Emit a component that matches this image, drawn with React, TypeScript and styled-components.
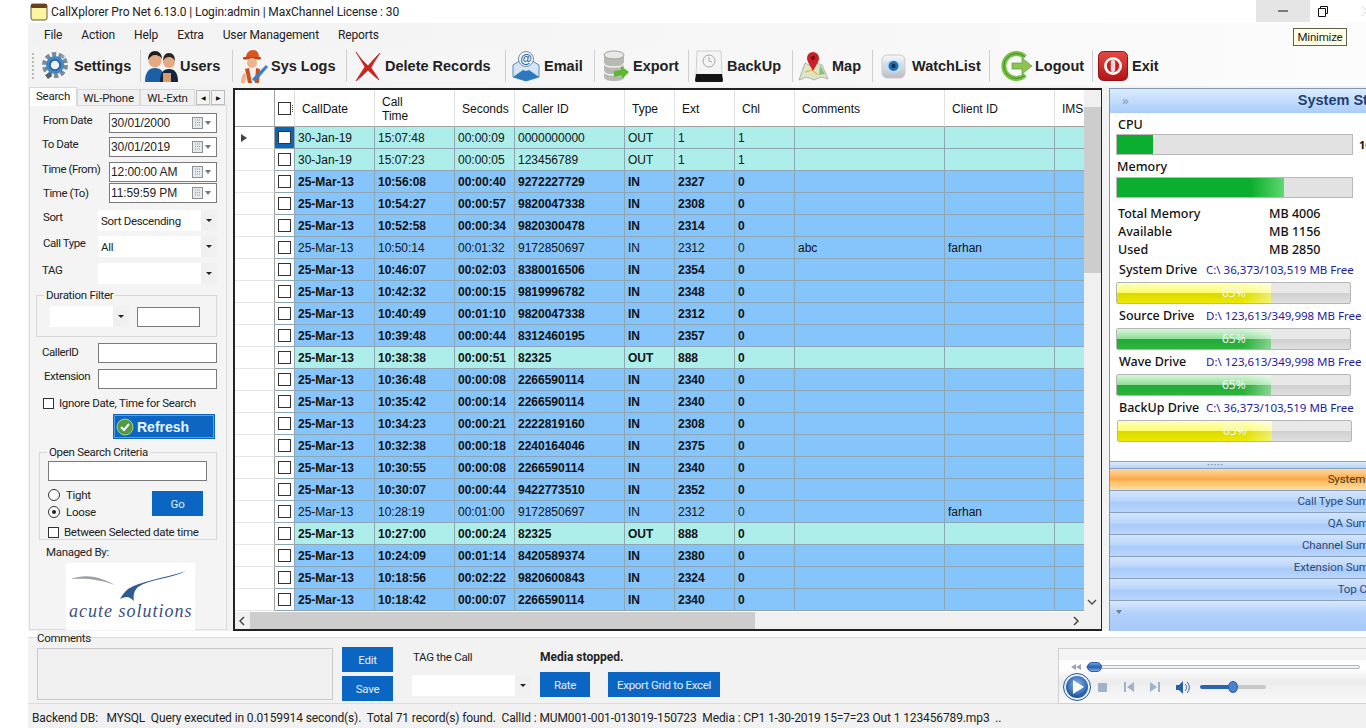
import React from 'react';
import styled, { createGlobalStyle } from 'styled-components';

// Grid data
interface CallRow {
  date: string;
  time: string;
  secs: string;
  caller: string;
  type: string;
  ext: string;
  chl: string;
  comment?: string;
  client?: string;
  plain?: boolean;
}

const m = (time: string, secs: string, caller: string, ext: string, extra: Partial<CallRow> = {}): CallRow => ({
  date: '25-Mar-13',
  time,
  secs,
  caller,
  type: 'IN',
  ext,
  chl: '0',
  ...extra,
});

const rows: CallRow[] = [
  { date: '30-Jan-19', time: '15:07:48', secs: '00:00:09', caller: '0000000000', type: 'OUT', ext: '1', chl: '1', plain: true },
  { date: '30-Jan-19', time: '15:07:23', secs: '00:00:05', caller: '123456789', type: 'OUT', ext: '1', chl: '1', plain: true },
  m('10:56:08', '00:00:40', '9272227729', '2327'),
  m('10:54:27', '00:00:57', '9820047338', '2308'),
  m('10:52:58', '00:00:34', '9820300478', '2314'),
  m('10:50:14', '00:01:32', '9172850697', '2312', { plain: true, comment: 'abc', client: 'farhan' }),
  m('10:46:07', '00:02:03', '8380016506', '2354'),
  m('10:42:32', '00:00:15', '9819996782', '2348'),
  m('10:40:49', '00:01:10', '9820047338', '2312'),
  m('10:39:48', '00:00:44', '8312460195', '2357'),
  m('10:38:38', '00:00:51', '82325', '888', { type: 'OUT' }),
  m('10:36:48', '00:00:08', '2266590114', '2340'),
  m('10:35:42', '00:00:14', '2266590114', '2340'),
  m('10:34:23', '00:00:21', '2222819160', '2308'),
  m('10:32:38', '00:00:18', '2240164046', '2375'),
  m('10:30:55', '00:00:08', '2266590114', '2340'),
  m('10:30:07', '00:00:44', '9422773510', '2352'),
  m('10:28:19', '00:01:00', '9172850697', '2312', { plain: true, client: 'farhan' }),
  m('10:27:00', '00:00:24', '82325', '888', { type: 'OUT' }),
  m('10:24:09', '00:01:14', '8420589374', '2380'),
  m('10:18:56', '00:02:22', '9820600843', '2324'),
  m('10:18:42', '00:00:07', '2266590114', '2340'),
];

const columns = '40px 20px 80px 80px 60px 110px 50px 60px 60px 150px 110px 60px';

const GlobalStyle = createGlobalStyle`
  html, body {
    margin: 0;
    height: 100%;
    overflow: hidden;
    background: #fff;
  }
  * {
    box-sizing: border-box;
  }
`;

const Shell = styled.div`
  position: relative;
  width: 1366px;
  height: 728px;
  padding-left: 28px;
  background: #fff;
  overflow: hidden;
  font-family: 'Liberation Sans', Arial, sans-serif;
  font-size: 12px;
  color: #111;
`;

/* Title bar */
const TitleBar = styled.div`
  display: flex;
  align-items: center;
  height: 23px;
  padding-left: 2px;
  background: #fff;
`;

const TitleText = styled.span`
  margin-left: 3px;
  font-family: Roboto, sans-serif;
  font-size: 12px;
  letter-spacing: -0.1px;
  color: #222;
`;

const WindowButtons = styled.div`
  display: flex;
  margin-left: auto;
`;

const WindowButton = styled.div<{ $hover?: boolean; $w: number }>`
  display: flex;
  align-items: center;
  justify-content: center;
  flex: none;
  width: ${(p) => p.$w}px;
  height: 22px;
  margin-top: -1px;
  background: ${(p) => (p.$hover ? '#e5e5e5' : 'transparent')};
`;

const CloseCorner = styled(WindowButton)`
  justify-content: flex-end;
  overflow: hidden;
`;

const Tooltip = styled.div`
  position: absolute;
  left: 1293px;
  top: 28px;
  width: 54px;
  height: 18px;
  border: 1px solid #5f5f4f;
  background: #ffffe6;
  font-family: Roboto, sans-serif;
  font-size: 11.5px;
  letter-spacing: -0.2px;
  line-height: 16px;
  text-align: center;
  color: #222;
`;

/* Menu */
const MenuBar = styled.div`
  display: flex;
  align-items: center;
  gap: 19px;
  height: 23px;
  padding-left: 16px;
  background: linear-gradient(90deg, #f2f2f2, #f8f8f8 70%, #fcfcfc);
  font-family: Roboto, sans-serif;
  font-size: 12px;
  letter-spacing: -0.12px;
  color: #222;
`;

/* Toolbar */
const Toolbar = styled.div`
  display: flex;
  align-items: center;
  height: 40px;
  padding-left: 4px;
  background: linear-gradient(90deg, #f3f3f3, #f8f8f8 70%, #fcfcfc);
`;

const ToolGrip = styled.div`
  width: 2px;
  height: 26px;
  margin-right: 6px;
  border-left: 2px dotted #b8b8b8;
`;

const ToolItem = styled.div<{ $w: number; $gap: number; $pad: number }>`
  display: flex;
  align-items: center;
  flex: none;
  gap: ${(p) => p.$gap}px;
  width: ${(p) => p.$w}px;
  height: 32px;
  padding-left: ${(p) => p.$pad}px;
  font-size: 14.5px;
  font-weight: 700;
  color: #222;
  white-space: nowrap;
  border-right: 1px solid #cfcfcf;
  &:last-child {
    border-right: 0;
  }
`;

/* Main area */
const Main = styled.div`
  display: flex;
  height: 545px;
  background: #f2f2f2;
`;

const LeftPanel = styled.div`
  flex: none;
  width: 205px;
  padding: 2px 6px 0 1px;
`;

const Tabs = styled.div`
  display: flex;
  align-items: flex-end;
  height: 18px;
  font-family: Roboto, sans-serif;
  font-size: 11.5px;
  letter-spacing: -0.2px;
  color: #222;
`;

const Tab = styled.div<{ $active?: boolean; $w: number }>`
  width: ${(p) => p.$w}px;
  height: ${(p) => (p.$active ? 19 : 17)}px;
  line-height: 16px;
  text-align: center;
  background: ${(p) => (p.$active ? '#fff' : '#f0f0f0')};
  border: 1px solid #d9d9d9;
  border-bottom: ${(p) => (p.$active ? '0' : '1px solid #d9d9d9')};
  position: relative;
  z-index: ${(p) => (p.$active ? 1 : 0)};
`;

const TabArrows = styled.div`
  display: flex;
  margin-left: 1px;
  margin-bottom: 1px;
`;

const TabArrow = styled.div`
  display: flex;
  align-items: center;
  justify-content: center;
  width: 14px;
  height: 15px;
  background: #f4f4f4;
  border: 1px solid #bdbdbd;
  font-size: 6px;
  color: #111;
  & + & {
    margin-left: 1px;
  }
`;

const TabBody = styled.div`
  height: 525px;
  margin-top: -1px;
  padding: 7px 9px 0 9px;
  border: 1px solid #dcdcdc;
  background: #f4f4f4;
  font-family: Roboto, sans-serif;
  font-size: 11.5px;
  letter-spacing: -0.3px;
  color: #222;
`;

const FieldRow = styled.div<{ $mt: number; $h?: number }>`
  display: flex;
  justify-content: space-between;
  height: ${(p) => p.$h ?? 20}px;
  margin-top: ${(p) => p.$mt}px;
`;

const FieldLabel = styled.span<{ $x?: number; $y?: number }>`
  margin: ${(p) => p.$y ?? 0}px 0 0 ${(p) => p.$x ?? 0}px;
  line-height: 14px;
  letter-spacing: -0.45px;
  white-space: nowrap;
`;

const DateBox = styled.div`
  display: flex;
  align-items: center;
  justify-content: space-between;
  width: 108px;
  height: 100%;
  padding: 0 4px 0 1px;
  border: 1px solid #7a7a7a;
  background: #fff;
  font-family: 'Liberation Sans', sans-serif;
  font-size: 12px;
  letter-spacing: -0.1px;
`;

const SelectBox = styled.div<{ $w: number }>`
  display: flex;
  align-items: center;
  justify-content: space-between;
  width: ${(p) => p.$w}px;
  height: 100%;
  padding-left: 3px;
  background: #fff;
  line-height: 20px;
`;

const SelectArrow = styled.span<{ $end?: boolean }>`
  display: flex;
  align-items: center;
  justify-content: center;
  flex: none;
  width: 16px;
  height: 100%;
  margin-left: ${(p) => (p.$end ? 'auto' : '0')};
  background: #f0f0f0;
  &::after {
    content: '';
    border-top: 3px solid #222;
    border-left: 3px solid transparent;
    border-right: 3px solid transparent;
  }
`;

const TextBox = styled.div<{ $w: number; $h?: number }>`
  flex: none;
  width: ${(p) => p.$w}px;
  height: ${(p) => p.$h ?? 20}px;
  background: #fff;
  border: 1px solid #7a7a7a;
`;

const Group = styled.fieldset<{ $mt: number; $h: number; $ml?: number; $pt?: number }>`
  display: block;
  min-width: 0;
  height: ${(p) => p.$h}px;
  margin: ${(p) => p.$mt}px 0 0 ${(p) => p.$ml ?? 0}px;
  padding: ${(p) => p.$pt ?? 4}px 8px 0 8px;
  border: 1px solid #d8d8d8;
`;

const GroupLegend = styled.legend`
  margin-left: -1px;
  padding: 0 2px;
  line-height: 14px;
`;

const DurationRow = styled.div`
  display: flex;
  align-items: flex-end;
  gap: 8px;
  height: 21px;
  margin-left: 5px;
`;

const CheckRow = styled.label<{ $mt: number; $ml: number }>`
  display: flex;
  align-items: center;
  gap: 5px;
  height: 14px;
  margin: ${(p) => p.$mt}px 0 0 ${(p) => p.$ml}px;
  white-space: nowrap;
`;

const CheckMark = styled.span`
  flex: none;
  width: 11px;
  height: 11px;
  border: 1px solid #333;
  background: #fff;
`;

const RefreshButton = styled.div`
  display: flex;
  align-items: center;
  gap: 3px;
  width: 102px;
  height: 25px;
  margin: 4px 0 0 74px;
  padding-left: 3px;
  background: #0d66c2;
  box-shadow: inset 0 0 0 1px #0d66c2, inset 0 0 0 2px #4ea3ee;
  font-family: 'Liberation Sans', sans-serif;
  font-size: 14px;
  font-weight: 700;
  letter-spacing: 0;
  color: #e8f3fc;
`;

const SearchOptions = styled.div`
  display: flex;
  justify-content: space-between;
  margin-top: 10px;
  padding-right: 5px;
`;

const RadioCol = styled.div`
  display: flex;
  flex-direction: column;
  gap: 3px;
  margin-top: -3px;
`;

const RadioRow = styled.label`
  display: flex;
  align-items: center;
  gap: 6px;
  height: 14px;
`;

const RadioMark = styled.span<{ $on?: boolean }>`
  display: flex;
  align-items: center;
  justify-content: center;
  width: 12px;
  height: 12px;
  border: 1px solid #333;
  border-radius: 50%;
  background: #fff;
  &::after {
    content: '';
    display: ${(p) => (p.$on ? 'block' : 'none')};
    width: 4px;
    height: 4px;
    border-radius: 50%;
    background: #222;
  }
`;

const BlueButton = styled.div<{ $w: number }>`
  display: flex;
  align-items: center;
  justify-content: center;
  flex: none;
  width: ${(p) => p.$w}px;
  height: 25px;
  background: #0a66c2;
  font-family: Roboto, sans-serif;
  font-size: 11.5px;
  letter-spacing: -0.3px;
  color: #e4eff9;
`;

const ManagedLabel = styled.div`
  margin: 5px 0 4px 7px;
  line-height: 14px;
`;

const LogoBox = styled.div`
  position: relative;
  width: 129px;
  height: 67px;
  margin-left: 27px;
  background: #fff;
`;

const LogoWord = styled.div`
  position: absolute;
  left: 3px;
  bottom: 8px;
  font-family: 'Liberation Serif', serif;
  font-size: 18px;
  font-style: italic;
  letter-spacing: 1px;
  color: #3c4f80;
  white-space: nowrap;
`;

/* Grid */
const GridFrame = styled.div`
  position: relative;
  flex: none;
  width: 869px;
  height: 543px;
  margin-top: 2px;
  border: 1px solid #222;
  border-width: 2px 1px 2px 2px;
  background: #f0f0f0;
  overflow: hidden;
`;

const GridBody = styled.div`
  width: 849px;
  height: 522px;
  background: #fff;
  overflow: hidden;
`;

const GridRow = styled.div<{ $head?: boolean; $bg?: string; $bold?: boolean }>`
  display: grid;
  grid-template-columns: ${columns};
  height: ${(p) => (p.$head ? 37 : 22)}px;
  font-weight: ${(p) => (p.$bold ? 700 : 400)};
  color: #111;
  & > div:not(:first-child) {
    background: ${(p) => p.$bg ?? '#fff'};
  }
`;

const Cell = styled.div<{ $head?: boolean }>`
  display: flex;
  align-items: center;
  padding: ${(p) => (p.$head ? '2px 0 0 7px' : '1px 0 0 3px')};
  border-right: 1px solid ${(p) => (p.$head ? '#e2e2e2' : '#8ea6b4')};
  border-bottom: 1px solid ${(p) => (p.$head ? '#a0a0a0' : '#8ea6b4')};
  line-height: 14px;
  white-space: nowrap;
  overflow: hidden;
`;

const RowHeadCell = styled(Cell)`
  padding: 0;
  background: #fff;
  border-right-color: #a0a0a0;
  border-bottom-color: ${(p) => (p.$head ? '#a0a0a0' : '#e4e4e4')};
`;

const CheckCell = styled(Cell)<{ $current?: boolean }>`
  justify-content: flex-start;
  padding: 0 0 0 3px;
  background: ${(p) => (p.$current ? '#0b66b8' : 'inherit')} !important;
`;

const RowCheck = styled.span`
  flex: none;
  width: 13px;
  height: 13px;
  border: 1px solid #333;
  background: #fff;
`;

const HeadGrip = styled.span`
  flex: none;
  height: 7px;
  margin-left: 1px;
  border-left: 1px dotted #555;
`;

const RowPointer = styled.span`
  margin-left: 6px;
  border-left: 6px solid #444;
  border-top: 4px solid transparent;
  border-bottom: 4px solid transparent;
`;

const VScroll = styled.div`
  position: absolute;
  top: 0;
  right: 0;
  bottom: 18px;
  width: 17px;
  background: #f0f0f0;
`;

const VThumb = styled.div`
  width: 100%;
  height: 166px;
  margin-top: 17px;
  background: #cdcdcd;
`;

const HScroll = styled.div`
  display: flex;
  align-items: center;
  height: 18px;
  background: #f0f0f0;
`;

const HThumb = styled.div`
  width: 505px;
  height: 100%;
  margin-left: 15px;
  background: #cdcdcd;
`;

const ScrollGlyph = styled.svg<{ $x: number; $y: number }>`
  position: absolute;
  left: ${(p) => p.$x}px;
  top: ${(p) => p.$y}px;
`;

/* Right panel */
const RightPanel = styled.div`
  flex: none;
  width: 300px;
  height: 543px;
  margin: 2px 0 0 7px;
  border: 1px solid #7f97b2;
  background: #fff;
  font-family: 'Noto Sans', sans-serif;
  font-size: 12.5px;
  font-weight: 500;
  color: #111;
`;

const PanelHead = styled.div`
  display: flex;
  align-items: center;
  height: 24px;
  padding: 0 0 2px 12px;
  background: linear-gradient(#dcebfd, #a9cdf9);
  color: #8aa0bd;
`;

const PanelTitle = styled.span`
  margin-left: 169px;
  font-family: 'Liberation Sans', sans-serif;
  font-size: 14.5px;
  font-weight: 700;
  color: #1f3f77;
  white-space: nowrap;
`;

const PanelBody = styled.div`
  height: 348px;
  padding: 3px 0 0 6px;
`;

const MetricLabel = styled.div<{ $x?: number; $mt?: number; $h?: number }>`
  height: ${(p) => p.$h ?? 17}px;
  margin: ${(p) => p.$mt ?? 0}px 0 0 ${(p) => p.$x ?? 1}px;
  line-height: 17px;
  white-space: nowrap;
`;

const MeterRow = styled.div`
  display: flex;
  align-items: center;
`;

const Meter = styled.div<{ $mt?: number }>`
  width: 237px;
  height: 21px;
  margin-top: ${(p) => p.$mt ?? 0}px;
  background: #e2e2e2;
  border: 1px solid #b9b9b9;
  overflow: hidden;
`;

const MeterFill = styled.div<{ $fade?: boolean }>`
  height: 100%;
  background: ${(p) => (p.$fade ? 'linear-gradient(90deg, #0bae2e 80%, #5fd76f)' : '#0bae2e')};
`;

const CpuValue = styled.span`
  margin-left: 6px;
  font-size: 11px;
  font-weight: 700;
`;

const MemoryRow = styled.div`
  display: grid;
  grid-template-columns: 151px auto;
  height: 18px;
  padding-left: 2px;
  line-height: 18px;
`;

const DriveHead = styled.div<{ $mt: number }>`
  display: flex;
  align-items: center;
  height: 18px;
  margin: ${(p) => p.$mt}px 0 0 3px;
  white-space: nowrap;
`;

const DriveName = styled.span`
  width: 87px;
`;

const DriveFree = styled.span`
  font-size: 11.5px;
  font-weight: 400;
  color: #1c1c9e;
`;

const DriveBar = styled.div<{ $ml?: number }>`
  position: relative;
  width: 235px;
  height: 22px;
  margin: 4px 0 0 ${(p) => p.$ml ?? 0}px;
  border: 1px solid #b5b5b5;
  border-radius: 2px;
  background: linear-gradient(#e8e8e8 48%, #cfcfcf 50%, #e0e0e0);
  overflow: hidden;
`;

const DriveFill = styled.div<{ $tone: 'yellow' | 'green' }>`
  position: relative;
  height: 100%;
  background: ${(p) =>
    p.$tone === 'yellow'
      ? 'linear-gradient(#ffffc0, #fdfd70 48%, #dcd800 50%, #ecea00)'
      : 'linear-gradient(#d8f5d8, #90e09a 48%, #23a936 50%, #2cb53c)'};
  &::after {
    content: '';
    position: absolute;
    top: 0;
    right: 0;
    bottom: 0;
    width: 28px;
    background: linear-gradient(90deg, rgba(255, 255, 255, 0), rgba(255, 255, 255, 0.45));
  }
`;

const DrivePct = styled.span`
  position: absolute;
  left: 105px;
  top: 2px;
  font-size: 12px;
  font-weight: 400;
  line-height: 16px;
  color: #f4f4f4;
`;

const Splitter = styled.div`
  display: flex;
  align-items: center;
  justify-content: center;
  height: 8px;
  padding-right: 87px;
  background: linear-gradient(#dbe9fb, #b7d4f9);
  border-top: 1px solid #8aa2bd;
  border-bottom: 1px solid #8aa2bd;
  font-size: 6px;
  line-height: 4px;
  letter-spacing: 1px;
  color: #7d8a9a;
`;

const NavItem = styled.div<{ $active?: boolean }>`
  height: 22px;
  padding-right: 14px;
  border-bottom: 1px solid #86a0bd;
  background: ${(p) =>
    p.$active
      ? 'linear-gradient(#ffd9a0, #fba849 50%, #fdbe62 60%, #ffdfa6)'
      : 'linear-gradient(#d4e5fc, #bcd7fb 45%, #a9cbfa 55%, #b9d5fb)'};
  font-family: Roboto, sans-serif;
  font-size: 11.5px;
  font-weight: 400;
  letter-spacing: -0.1px;
  line-height: 21px;
  text-align: right;
  color: ${(p) => (p.$active ? '#4a3a20' : '#2a4a7a')};
`;

const NavFooter = styled.div`
  height: 30px;
  padding: 9px 0 0 6px;
  background: linear-gradient(#dbe9fc, #b3d1fa 40%, #a8caf9);
`;

/* Bottom section */
const BottomGroup = styled.div`
  display: flex;
  height: 67px;
  margin-top: 6px;
  padding: 0 0 0 9px;
  border-top: 1px solid #dcdcdc;
  border-bottom: 1px solid #dcdcdc;
  background: #f2f2f2;
`;

const BottomRow = styled.div`
  display: flex;
  width: 100%;
  height: 72px;
  margin-top: -7px;
  font-family: Roboto, sans-serif;
  font-size: 11.5px;
  letter-spacing: -0.3px;
  color: #222;
`;

const CommentsCol = styled.div`
  flex: none;
  width: 296px;
`;

const CommentsLabel = styled.div`
  width: 52px;
  height: 14px;
  line-height: 14px;
  background: #f2f2f2;
`;

const CommentsBox = styled.div`
  height: 52px;
  margin-top: 3px;
  border: 1px solid #c9c9c9;
  background: #f0f0f0;
`;

const EditCol = styled.div`
  display: flex;
  flex-direction: column;
  gap: 4px;
  margin: 16px 0 0 9px;
`;

const TagCol = styled.div`
  width: 119px;
  margin: 19px 0 0 19px;
`;

const TagLabel = styled.div`
  height: 14px;
  margin-left: 1px;
  line-height: 14px;
`;

const TagSelect = styled.div`
  height: 21px;
  margin-top: 11px;
`;

const MediaCol = styled.div`
  margin: 19px 0 0 9px;
`;

const MediaText = styled.div`
  height: 14px;
  line-height: 14px;
  font-size: 12px;
  font-weight: 700;
  letter-spacing: 0;
`;

const MediaButtons = styled.div`
  display: flex;
  gap: 18px;
  margin-top: 8px;
`;

const Player = styled.div`
  flex: none;
  width: 308px;
  height: 56px;
  margin: 17px 0 0 auto;
  border: 1px solid #d0d0d0;
  border-right: 0;
  background: linear-gradient(#fbfbfb, #ffffff 35%, #ececec 60%, #fafafa);
`;

const PlayerStrip = styled.div`
  height: 11px;
  background: #f4f4f4;
`;

const SeekRow = styled.div`
  display: flex;
  align-items: center;
  gap: 5px;
  height: 13px;
  padding-left: 12px;
`;

const SeekTrack = styled.div`
  position: relative;
  width: 274px;
  height: 4px;
  border: 1px solid #aeb6bf;
  border-radius: 2px;
  background: #f4f4f4;
`;

const SeekThumb = styled.span`
  position: absolute;
  left: 0;
  top: -4px;
  width: 15px;
  height: 10px;
  border-radius: 5px;
  background: linear-gradient(#6f9fe0, #2a5fb0 50%, #7eaae6);
  border: 1px solid #2b5ca6;
`;

const TransportRow = styled.div`
  display: flex;
  align-items: center;
  height: 28px;
  padding-left: 4px;
`;

const VolumeTrack = styled.div`
  position: relative;
  width: 66px;
  height: 4px;
  margin-left: 9px;
  border-radius: 2px;
  background: linear-gradient(90deg, #2a62b5 50%, #c8c8c8 50%);
`;

const VolumeThumb = styled.span`
  position: absolute;
  left: 28px;
  top: -4px;
  width: 10px;
  height: 12px;
  border-radius: 50%;
  background: #4a82cc;
  border: 1px solid #2b5ca6;
`;

const StatusBar = styled.div`
  display: flex;
  align-items: center;
  height: 24px;
  padding: 4px 0 0 4px;
  background: #f1f1f1;
  font-family: Roboto, sans-serif;
  font-size: 12px;
  letter-spacing: -0.12px;
  color: #222;
  white-space: nowrap;
`;

const MiniGlyph = styled.svg<{ $ml: number }>`
  flex: none;
  margin-left: ${(p) => p.$ml}px;
`;

/* Icons */
const AppIcon = () => (
  <svg width="18" height="18" viewBox="0 0 18 18">
    <rect x="1" y="1" width="16" height="16" rx="2" fill="#fdf3a0" stroke="#6b5a3a" />
    <rect x="1" y="1" width="16" height="4" rx="1" fill="#6b3f1f" />
  </svg>
);

const GearIcon = () => (
  <svg width="30" height="30" viewBox="0 0 30 30">
    <circle cx="15" cy="14" r="10.5" fill="none" stroke="#7d8b96" strokeWidth="5" strokeDasharray="4.2 2.4" />
    <circle cx="15" cy="14" r="9" fill="#3f86c8" />
    <circle cx="15" cy="14" r="5" fill="#eef3f7" stroke="#26598c" strokeWidth="1.5" />
    <path d="M5 24l5-3 2 4-4 3z" fill="#55606a" />
    <path d="M22 3l3 2-2 3-3-2z" fill="#8fa0ad" />
  </svg>
);

const UsersIcon = () => (
  <svg width="33" height="34" viewBox="0 0 33 34">
    <path d="M0 33c0-10 4-14 10-14s10 4 10 14z" fill="#1b5fa8" />
    <circle cx="10" cy="12" r="6.5" fill="#e3a983" />
    <path d="M3 11c0-6 3-9 7-9s7 3 7 8c-2-3-4-4-7-4s-5 2-7 5z" fill="#1d1d1d" />
    <path d="M15 33c0-9 3-13 9-13s9 4 9 13z" fill="#13253e" />
    <rect x="18" y="24" width="8" height="9" fill="#d59d6f" />
    <circle cx="24" cy="13" r="6" fill="#e3a983" />
    <path d="M18 12c0-5 2-8 6-8s6 3 6 8c-2-3-3-4-6-4s-4 1-6 4z" fill="#262626" />
  </svg>
);

const WorkerIcon = () => (
  <svg width="31" height="34" viewBox="0 0 31 34">
    <path d="M8 9c0-5 3-8 7-8s6 3 6 8z" fill="#d9541e" />
    <rect x="5" y="8" width="18" height="2.5" rx="1" fill="#b8441a" />
    <circle cx="14" cy="14" r="5" fill="#e9b48e" />
    <path d="M3 34c0-11 4-15 11-15s10 4 10 15z" fill="#f1f1ef" />
    <path d="M7 20l3 14h4l-3-15zM18 19l-1 15h4l1-14z" fill="#cf4e1c" />
    <path d="M14 30l14-14 2 2-13 15z" fill="#3d7fc4" />
    <path d="M3 34c0-5 1-8 3-10l3 2-2 8z" fill="#e9b48e" />
  </svg>
);

const CrossIcon = () => (
  <svg width="29" height="30" viewBox="0 0 29 30">
    <path d="M3 1c4 6 8 10 12 14 4-5 8-9 12-13-3 5-7 10-9 15 3 4 6 8 8 12-4-3-8-7-11-10-4 4-8 8-12 11 3-5 6-10 9-14C9 11 6 6 3 1z" fill="#d8201b" stroke="#a31512" strokeWidth=".6" />
  </svg>
);

const MailIcon = () => (
  <svg width="31" height="32" viewBox="0 0 31 32">
    <path d="M2 15l13-8 13 8v12l-13 4-13-4z" fill="#d3e4f5" stroke="#5a89b8" />
    <path d="M2 27l10-7 3 1 3-1 10 7-13 4z" fill="#2e78c0" />
    <circle cx="15" cy="9" r="7.5" fill="#f4f8fb" stroke="#6f8ea8" />
    <text x="15" y="13" fontSize="12" fontWeight="700" textAnchor="middle" fill="#2e5f94" fontFamily="Liberation Sans">@</text>
  </svg>
);

const DatabaseIcon = () => (
  <svg width="27" height="32" viewBox="0 0 27 32">
    <path d="M1 5v22c0 2.5 4 4 10 4s10-1.500 10-4V5z" fill="#b8b8b4" />
    <ellipse cx="11" cy="5" rx="10" ry="4" fill="#e8e8e4" stroke="#a2a29e" />
    <path d="M1 13c0 2.500 4 4 10 4s10-1.500 10-4M1 21c0 2.500 4 4 10 4s10-1.500 10-4" fill="none" stroke="#f0f0ee" strokeWidth="1.500" />
    <path d="M11 21l7-1v-4l8 6-7 7v-4l-8 2z" fill="#5cb82f" />
  </svg>
);

const BackupIcon = () => (
  <svg width="30" height="34" viewBox="0 0 30 34">
    <path d="M3 2h24l1 24H2z" fill="#f4f4f4" stroke="#cfcfcf" />
    <path d="M2 25h26l1 6c0 2-1 2-2 2H3c-1 0-2 0-2-2z" fill="#141414" />
    <circle cx="15" cy="12" r="6" fill="none" stroke="#a6a6a6" />
    <path d="M15 8v4l3 1" fill="none" stroke="#a6a6a6" />
  </svg>
);

const MapIcon = () => (
  <svg width="31" height="32" viewBox="0 0 31 32">
    <path d="M1 30l6-17 6 3 6-3 5 2 6 14-7-2-7 3-7-3z" fill="#dfe6c8" stroke="#9aa99a" strokeWidth=".8" />
    <path d="M7 22l7-2 6 5" fill="none" stroke="#e7c04a" strokeWidth="1.500" />
    <path d="M22 15l5 9-6 1z" fill="#8ec07a" />
    <path d="M15 21C11 14 9 11 9 8a6 6 0 0 1 12 0c0 3-2 6-6 13z" fill="#cb2027" />
    <circle cx="15" cy="8" r="2.200" fill="#7c1216" />
  </svg>
);

const EyeIcon = () => (
  <svg width="25" height="25" viewBox="0 0 25 25">
    <defs>
      <linearGradient id="eyeBg" x1="0" y1="0" x2="0" y2="1">
        <stop offset="0" stopColor="#f6f7f8" />
        <stop offset="1" stopColor="#b9bec4" />
      </linearGradient>
    </defs>
    <rect x="1" y="1" width="23" height="23" rx="5" fill="url(#eyeBg)" stroke="#c8cbcf" />
    <path d="M3 12c3-4 6-6 9.500-6S19 8 22 12c-3 4-6 6-9.500 6S6 16 3 12z" fill="#bfe0f5" />
    <circle cx="12.500" cy="12" r="5" fill="#1d6fb6" />
    <circle cx="12.500" cy="12" r="2.200" fill="#0c3358" />
  </svg>
);

const LogoutIcon = () => (
  <svg width="33" height="34" viewBox="0 0 33 34">
    <path d="M25 8a12.500 12.500 0 1 0 0 18" fill="none" stroke="#7cc043" strokeWidth="5" />
    <path d="M25 8a12.500 12.500 0 1 0 0 18" fill="none" stroke="#2d8f2a" strokeWidth="1" />
    <path d="M12 14h10v-5l10 8-10 8v-5H12z" fill="#8fc34f" stroke="#4f8f2d" strokeWidth=".6" />
  </svg>
);

const ExitIcon = () => (
  <svg width="30" height="30" viewBox="0 0 30 30">
    <defs>
      <linearGradient id="exitBg" x1="0" y1="0" x2="0" y2="1">
        <stop offset="0" stopColor="#e64a45" />
        <stop offset="1" stopColor="#b31414" />
      </linearGradient>
    </defs>
    <rect x="0.500" y="0.500" width="29" height="29" rx="5" fill="url(#exitBg)" stroke="#8f1414" />
    <circle cx="15" cy="15" r="9" fill="#f5f5f5" />
    <circle cx="15" cy="15" r="6.200" fill="#c81e1e" />
    <rect x="12.800" y="9" width="4.400" height="12" rx="2" fill="#f5d9d9" />
  </svg>
);

const CalendarIcon = () => (
  <svg width="20" height="12" viewBox="0 0 20 12">
    <rect x="0.500" y="0.500" width="10" height="11" fill="#e6e9ee" stroke="#8b8f96" />
    <path d="M3 3h5M3 5.500h5M3 8h5" stroke="#8f96a0" strokeDasharray="1 1" />
    <path d="M13 4h6l-3 4z" fill="#6f7680" />
  </svg>
);

const CheckBadge = () => (
  <svg width="18" height="18" viewBox="0 0 18 18">
    <circle cx="9" cy="9" r="8" fill="#4f9a42" stroke="#a8cf8f" />
    <path d="M5 9l3 3 5-6" fill="none" stroke="#fff" strokeWidth="2" />
  </svg>
);

const LogoBird = () => (
  <svg width="129" height="46" viewBox="0 0 129 46">
    <path d="M5 16c14-5 28-3 44 6-16-6-30-7-44-6z" fill="#9a9ea6" />
    <path d="M120 8C96 16 74 18 62 26c-4 3-6 7-8 10 6-3 9-3 14 2-1-6 0-10 4-14 12-8 32-8 48-16z" fill="#2f5b95" />
  </svg>
);

const PlayIcon = () => (
  <svg width="28" height="28" viewBox="0 0 28 28">
    <defs>
      <radialGradient id="playBg" cx="0.500" cy="0.400" r="0.600">
        <stop offset="0" stopColor="#8fbdf0" />
        <stop offset="1" stopColor="#164e9e" />
      </radialGradient>
    </defs>
    <circle cx="14" cy="14" r="13.500" fill="#eaf1fa" stroke="#25569e" />
    <circle cx="14" cy="14" r="11" fill="url(#playBg)" />
    <path d="M10 7l11 7-11 7z" fill="#fff" />
  </svg>
);

const toolItems = [
  { label: 'Settings', w: 101, pad: 0, gap: 4, icon: <GearIcon /> },
  { label: 'Users', w: 92, pad: 4, gap: 2, icon: <UsersIcon /> },
  { label: 'Sys Logs', w: 114, pad: 5, gap: 2, icon: <WorkerIcon /> },
  { label: 'Delete Records', w: 159, pad: 6, gap: 3, icon: <CrossIcon /> },
  { label: 'Email', w: 89, pad: 5, gap: 2, icon: <MailIcon /> },
  { label: 'Export', w: 94, pad: 8, gap: 3, icon: <DatabaseIcon /> },
  { label: 'BackUp', w: 104, pad: 5, gap: 3, icon: <BackupIcon /> },
  { label: 'Map', w: 80, pad: 5, gap: 3, icon: <MapIcon /> },
  { label: 'WatchList', w: 117, pad: 8, gap: 6, icon: <EyeIcon /> },
  { label: 'Logout', w: 103, pad: 10, gap: 2, icon: <LogoutIcon /> },
  { label: 'Exit', w: 90, pad: 5, gap: 4, icon: <ExitIcon /> },
];

const dateFields = [
  { label: 'From Date', value: '30/01/2000', mt: 0, x: 4, y: 0 },
  { label: 'To Date', value: '30/01/2019', mt: 4, x: 3, y: 0 },
  { label: 'Time (From)', value: '12:00:00 AM', mt: 5, x: 3, y: 0 },
  { label: 'Time (To)', value: '11:59:59 PM', mt: 1, x: 4, y: 3 },
];

const drives = [
  { name: 'System Drive', free: 'C:\\ 36,373/103,519 MB Free', tone: 'yellow' as const, mt: 1 },
  { name: 'Source Drive', free: 'D:\\ 123,613/349,998 MB Free', tone: 'green' as const, mt: 2 },
  { name: 'Wave Drive', free: 'D:\\ 123,613/349,998 MB Free', tone: 'green' as const, mt: 2 },
  { name: 'BackUp Drive', free: 'C:\\ 36,373/103,519 MB Free', tone: 'yellow' as const, mt: 2, ml: 1 },
];

const panels = ['System Stats', 'Call Type Summary', 'QA Summary', 'Channel Summary', 'Extension Summary', 'Top Callers'];

export default function App() {
  return (
    <Shell>
      <GlobalStyle />
      <TitleBar>
        <AppIcon />
        <TitleText>CallXplorer Pro Net 6.13.0 | Login:admin | MaxChannel License : 30</TitleText>
        <WindowButtons>
          <WindowButton $hover $w={54}>
            <svg width="10" height="10" viewBox="0 0 10 10"><path d="M0 5h10" stroke="#111" /></svg>
          </WindowButton>
          <WindowButton $w={26}>
            <svg width="10" height="11" viewBox="0 0 10 11"><path d="M2.500 2.500V.5h7v7h-2M.5 2.500h7v8h-7z" fill="none" stroke="#111" /></svg>
          </WindowButton>
          <CloseCorner $w={30}>
            <svg width="4" height="10" viewBox="0 0 4 10"><path d="M0 0l5 5-5 5" fill="none" stroke="#d8d8d8" /></svg>
          </CloseCorner>
        </WindowButtons>
      </TitleBar>
      <Tooltip>Minimize</Tooltip>

      <MenuBar>
        <span>File</span>
        <span>Action</span>
        <span>Help</span>
        <span>Extra</span>
        <span>User Management</span>
        <span>Reports</span>
      </MenuBar>

      <Toolbar>
        <ToolGrip />
        {toolItems.map((t) => (
          <ToolItem key={t.label} $w={t.w} $gap={t.gap} $pad={t.pad}>
            {t.icon}
            <span>{t.label}</span>
          </ToolItem>
        ))}
      </Toolbar>

      <Main>
        <LeftPanel>
          <Tabs>
            <Tab $active $w={48}>Search</Tab>
            <Tab $w={63}>WL-Phone</Tab>
            <Tab $w={55}>WL-Extn</Tab>
            <TabArrows>
              <TabArrow>◀</TabArrow>
              <TabArrow>▶</TabArrow>
            </TabArrows>
          </Tabs>
          <TabBody>
            {dateFields.map((f) => (
              <FieldRow key={f.label} $mt={f.mt}>
                <FieldLabel $x={f.x} $y={f.y}>{f.label}</FieldLabel>
                <DateBox>
                  {f.value}
                  <CalendarIcon />
                </DateBox>
              </FieldRow>
            ))}
            <FieldRow $mt={7} $h={21}>
              <FieldLabel $x={4}>Sort</FieldLabel>
              <SelectBox $w={119}>Sort Descending<SelectArrow /></SelectBox>
            </FieldRow>
            <FieldRow $mt={5} $h={21}>
              <FieldLabel $x={4}>Call Type</FieldLabel>
              <SelectBox $w={119}>All<SelectArrow /></SelectBox>
            </FieldRow>
            <FieldRow $mt={6} $h={21}>
              <FieldLabel $x={3}>TAG</FieldLabel>
              <SelectBox $w={119}><SelectArrow $end /></SelectBox>
            </FieldRow>
            <Group $mt={4} $h={49} $ml={-3}>
              <GroupLegend>Duration Filter</GroupLegend>
              <DurationRow>
                <SelectBox $w={79}><SelectArrow $end /></SelectBox>
                <TextBox $w={63} />
              </DurationRow>
            </Group>
            <FieldRow $mt={6}>
              <FieldLabel $x={3} $y={2}>CallerID</FieldLabel>
              <TextBox $w={119} />
            </FieldRow>
            <FieldRow $mt={6}>
              <FieldLabel $x={5}>Extension</FieldLabel>
              <TextBox $w={119} />
            </FieldRow>
            <CheckRow $mt={7} $ml={4}><CheckMark />Ignore Date, Time for Search</CheckRow>
            <RefreshButton><CheckBadge />Refresh</RefreshButton>
            <Group $mt={6} $h={95} $pt={2}>
              <GroupLegend>Open Search Criteria</GroupLegend>
              <TextBox $w={159} />
              <SearchOptions>
                <RadioCol>
                  <RadioRow><RadioMark />Tight</RadioRow>
                  <RadioRow><RadioMark $on />Loose</RadioRow>
                </RadioCol>
                <BlueButton $w={51}>Go</BlueButton>
              </SearchOptions>
              <CheckRow $mt={6} $ml={0}><CheckMark />Between Selected date time</CheckRow>
            </Group>
            <ManagedLabel>Managed By:</ManagedLabel>
            <LogoBox>
              <LogoBird />
              <LogoWord>acute solutions</LogoWord>
            </LogoBox>
          </TabBody>
        </LeftPanel>

        <GridFrame>
          <GridBody>
            <GridRow $head>
              <RowHeadCell $head />
              <CheckCell $head><RowCheck /><HeadGrip /></CheckCell>
              <Cell $head>CallDate</Cell>
              <Cell $head>Call<br />Time</Cell>
              <Cell $head>Seconds</Cell>
              <Cell $head>Caller ID</Cell>
              <Cell $head>Type</Cell>
              <Cell $head>Ext</Cell>
              <Cell $head>Chl</Cell>
              <Cell $head>Comments</Cell>
              <Cell $head>Client ID</Cell>
              <Cell $head>IMSI</Cell>
            </GridRow>
            {rows.map((r, i) => (
              <GridRow key={i} $bg={r.type === 'OUT' ? '#aeeeea' : '#86c5fb'} $bold={!r.plain}>
                <RowHeadCell>{i === 0 && <RowPointer />}</RowHeadCell>
                <CheckCell $current={i === 0}><RowCheck /></CheckCell>
                <Cell>{r.date}</Cell>
                <Cell>{r.time}</Cell>
                <Cell>{r.secs}</Cell>
                <Cell>{r.caller}</Cell>
                <Cell>{r.type}</Cell>
                <Cell>{r.ext}</Cell>
                <Cell>{r.chl}</Cell>
                <Cell>{r.comment}</Cell>
                <Cell>{r.client}</Cell>
                <Cell />
              </GridRow>
            ))}
          </GridBody>
          <VScroll><VThumb /></VScroll>
          <ScrollGlyph $x={852} $y={509} width="10" height="6" viewBox="0 0 10 6"><path d="M1 1l4 4 4-4" fill="none" stroke="#555" strokeWidth="1.500" /></ScrollGlyph>
          <HScroll><HThumb /></HScroll>
          <ScrollGlyph $x={4} $y={526} width="6" height="10" viewBox="0 0 6 10"><path d="M5 1L1 5l4 4" fill="none" stroke="#444" strokeWidth="1.500" /></ScrollGlyph>
          <ScrollGlyph $x={838} $y={526} width="6" height="10" viewBox="0 0 6 10"><path d="M1 1l4 4-4 4" fill="none" stroke="#444" strokeWidth="1.500" /></ScrollGlyph>
        </GridFrame>

        <RightPanel>
          <PanelHead>
            <span>»</span>
            <PanelTitle>System Status</PanelTitle>
          </PanelHead>
          <PanelBody>
            <MetricLabel $x={2} $h={18}>CPU</MetricLabel>
            <MeterRow>
              <Meter><MeterFill style={{ width: '15.5%' }} /></Meter>
              <CpuValue>16%</CpuValue>
            </MeterRow>
            <MetricLabel $mt={3}>Memory</MetricLabel>
            <Meter $mt={2}><MeterFill $fade style={{ width: '71%' }} /></Meter>
            <MemoryRow style={{ marginTop: 7 }}><span>Total Memory</span><span>MB 4006</span></MemoryRow>
            <MemoryRow><span>Available</span><span>MB 1156</span></MemoryRow>
            <MemoryRow><span>Used</span><span>MB 2850</span></MemoryRow>
            {drives.map((d) => (
              <React.Fragment key={d.name}>
                <DriveHead $mt={d.mt}><DriveName>{d.name}</DriveName><DriveFree>{d.free}</DriveFree></DriveHead>
                <DriveBar $ml={d.ml}><DriveFill $tone={d.tone} style={{ width: '66%' }} /><DrivePct>65%</DrivePct></DriveBar>
              </React.Fragment>
            ))}
          </PanelBody>
          <Splitter>•••••</Splitter>
          {panels.map((p, i) => (
            <NavItem key={p} $active={i === 0}>{p}</NavItem>
          ))}
          <NavFooter>
            <svg width="6" height="4" viewBox="0 0 6 4" style={{ display: 'block' }}><path d="M0 0h6L3 4z" fill="#6f7f94" /></svg>
          </NavFooter>
        </RightPanel>
      </Main>

      <BottomGroup>
        <BottomRow>
          <CommentsCol>
            <CommentsLabel>Comments</CommentsLabel>
            <CommentsBox />
          </CommentsCol>
          <EditCol>
            <BlueButton $w={51}>Edit</BlueButton>
            <BlueButton $w={51}>Save</BlueButton>
          </EditCol>
          <TagCol>
            <TagLabel>TAG the Call</TagLabel>
            <TagSelect><SelectBox $w={119}><SelectArrow $end /></SelectBox></TagSelect>
          </TagCol>
          <MediaCol>
            <MediaText>Media stopped.</MediaText>
            <MediaButtons>
              <BlueButton $w={50}>Rate</BlueButton>
              <BlueButton $w={112}>Export Grid to Excel</BlueButton>
            </MediaButtons>
          </MediaCol>
          <Player>
            <PlayerStrip />
            <SeekRow>
              <svg width="10" height="6" viewBox="0 0 10 6"><path d="M5 0v6L0 3zM10 0v6L5 3z" fill="#9aa6b4" /></svg>
              <SeekTrack><SeekThumb /></SeekTrack>
            </SeekRow>
            <TransportRow>
              <PlayIcon />
              <MiniGlyph $ml={7} width="9" height="9" viewBox="0 0 9 9"><rect width="9" height="9" rx="1" fill="#9fb2cc" /></MiniGlyph>
              <MiniGlyph $ml={17} width="10" height="10" viewBox="0 0 10 10"><path d="M0 0h2v10H0zM10 0v10L3 5z" fill="#9fb2cc" /></MiniGlyph>
              <MiniGlyph $ml={16} width="10" height="10" viewBox="0 0 10 10"><path d="M0 0v10l7-5zM8 0h2v10H8z" fill="#9fb2cc" /></MiniGlyph>
              <MiniGlyph $ml={16} width="15" height="13" viewBox="0 0 15 13"><path d="M0 4h3l4-4v13L3 9H0z" fill="#2a5fa8" /><path d="M9 3c2 2 2 5 0 7M11 1c3 3 3 8 0 11" fill="none" stroke="#2a5fa8" /></MiniGlyph>
              <VolumeTrack><VolumeThumb /></VolumeTrack>
            </TransportRow>
          </Player>
        </BottomRow>
      </BottomGroup>

      <StatusBar>
        Backend DB:&nbsp;&nbsp; MYSQL&nbsp; Query executed in 0.0159914 second(s).&nbsp; Total 71 record(s) found.&nbsp; CallId : MUM001-001-013019-150723&nbsp; Media : CP1 1-30-2019 15=7=23 Out 1 123456789.mp3&nbsp; ..
      </StatusBar>
    </Shell>
  );
}
